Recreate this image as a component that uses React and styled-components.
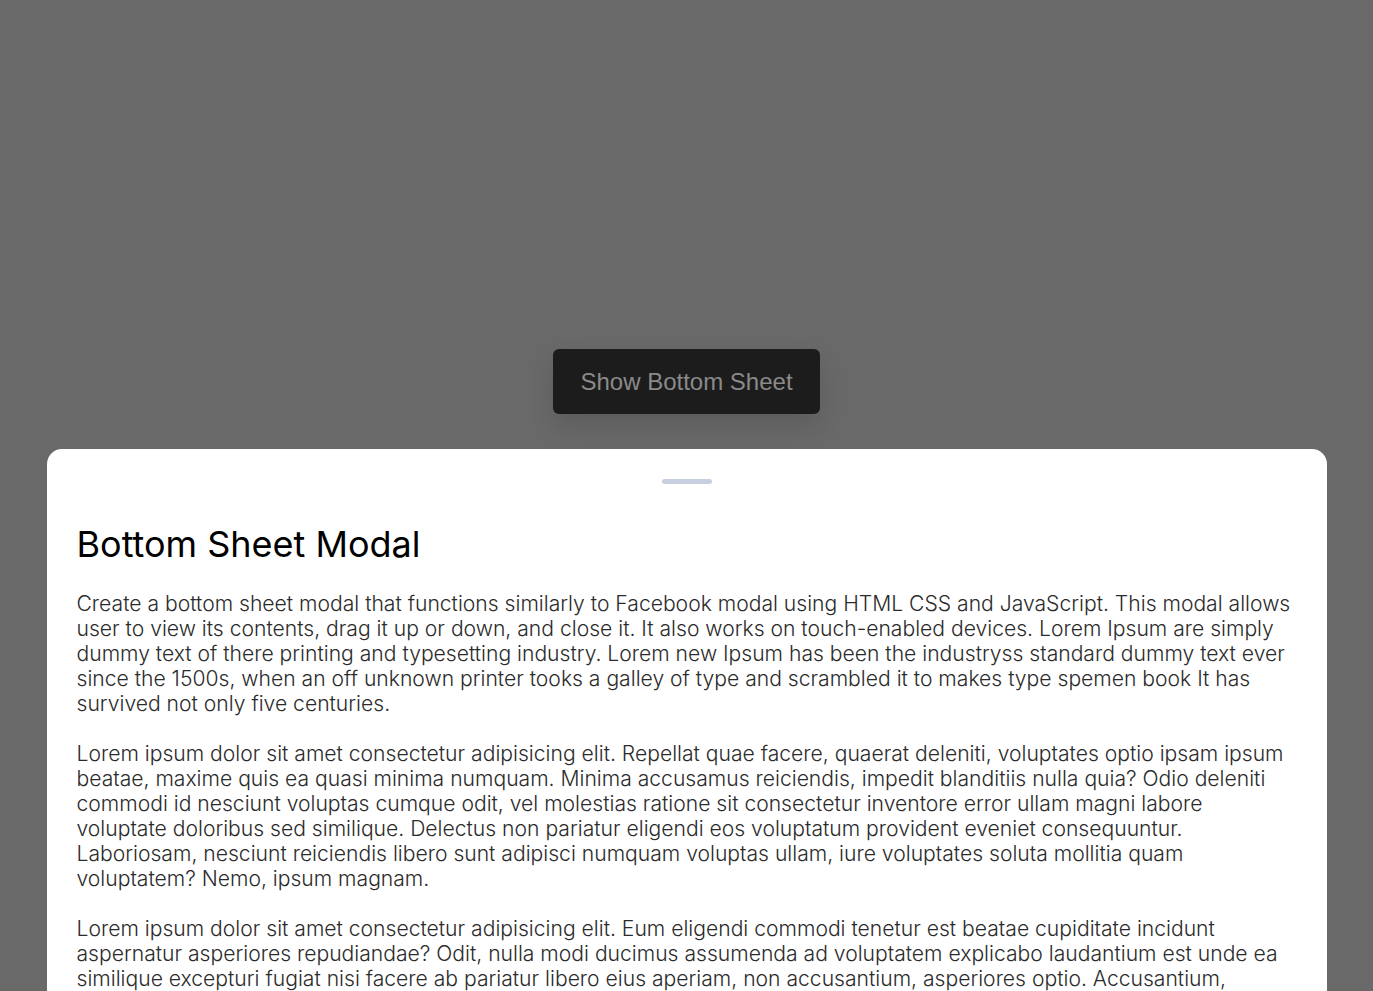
import React from "react"
import styled, { createGlobalStyle } from "styled-components"

const GlobalStyle = createGlobalStyle`
  * {
    box-sizing: border-box;
  }
  body {
    margin: 0;
    background: #696969;
    font-family: Inter, "Noto Sans", sans-serif;
    overflow: hidden;
  }
`

const Page = styled.div`
  height: 991px;
  display: flex;
  flex-direction: column;
  align-items: center;
  padding-top: 349px;
  overflow: hidden;
`

const ShowButton = styled.button`
  flex-shrink: 0;
  width: 267px;
  height: 65px;
  border: none;
  border-radius: 6px;
  background: #1c1c1c;
  color: #8a8a8a;
  font-family: "Liberation Sans", Arial, sans-serif;
  font-size: 24px;
  box-shadow: 0 12px 24px rgba(0, 0, 0, 0.12);
  cursor: pointer;
`

const Sheet = styled.div`
  width: 1280px;
  margin-top: 35px;
  flex: 1 0 auto;
  background: #fff;
  border-radius: 15px 15px 0 0;
  padding: 30px 30px 0;
`

const Header = styled.div`
  display: flex;
  justify-content: center;
`

const DragIcon = styled.div`
  padding: 0 19px 19px;
  cursor: grab;

  span {
    display: block;
    width: 50px;
    height: 5px;
    border-radius: 50px;
    background: #c7d0e1;
  }
`

const Body = styled.div`
  padding-top: 19px;
`

const Title = styled.h2`
  margin: 0;
  font-size: 36px;
  font-weight: 400;
  color: #000;
  line-height: 44px;
`

const Text = styled.p`
  margin: 25px 0 0;
  font-size: 21.12px;
  line-height: 25px;
  font-weight: 300;
  color: #2b2b2b;
`

export default function App() {
  return (
    <>
      <GlobalStyle />
      <Page>
        <ShowButton>Show Bottom Sheet</ShowButton>
        <Sheet>
          <Header>
            <DragIcon>
              <span />
            </DragIcon>
          </Header>
          <Body>
            <Title>Bottom Sheet Modal</Title>
            <Text>
              Create a bottom sheet modal that functions similarly to Facebook modal using HTML CSS
              and JavaScript. This modal allows user to view its contents, drag it up or down, and
              close it. It also works on touch-enabled devices. Lorem Ipsum are simply dummy text of
              there printing and typesetting industry. Lorem new Ipsum has been the industryss
              standard dummy text ever since the 1500s, when an off unknown printer tooks a galley of
              type and scrambled it to makes type spemen book It has survived not only five
              centuries.
            </Text>
            <Text>
              Lorem ipsum dolor sit amet consectetur adipisicing elit. Repellat quae facere, quaerat
              deleniti, voluptates optio ipsam ipsum beatae, maxime quis ea quasi minima numquam.
              Minima accusamus reiciendis, impedit blanditiis nulla quia? Odio deleniti commodi id
              nesciunt voluptas cumque odit, vel molestias ratione sit consectetur inventore error
              ullam magni labore voluptate doloribus sed similique. Delectus non pariatur eligendi eos
              voluptatum provident eveniet consequuntur. Laboriosam, nesciunt reiciendis libero sunt
              adipisci numquam voluptas ullam, iure voluptates soluta mollitia quam voluptatem? Nemo,
              ipsum magnam.
            </Text>
            <Text>
              Lorem ipsum dolor sit amet consectetur adipisicing elit. Eum eligendi commodi tenetur
              est beatae cupiditate incidunt aspernatur asperiores repudiandae? Odit, nulla modi
              ducimus assumenda ad voluptatem explicabo laudantium est unde ea similique excepturi
              fugiat nisi facere ab pariatur libero eius aperiam, non accusantium, asperiores optio.
              Accusantium, reprehenderit natus consequatur dolore temporibus, voluptas maxime quia
              eius quibusdam?
            </Text>
          </Body>
        </Sheet>
      </Page>
    </>
  )
}
